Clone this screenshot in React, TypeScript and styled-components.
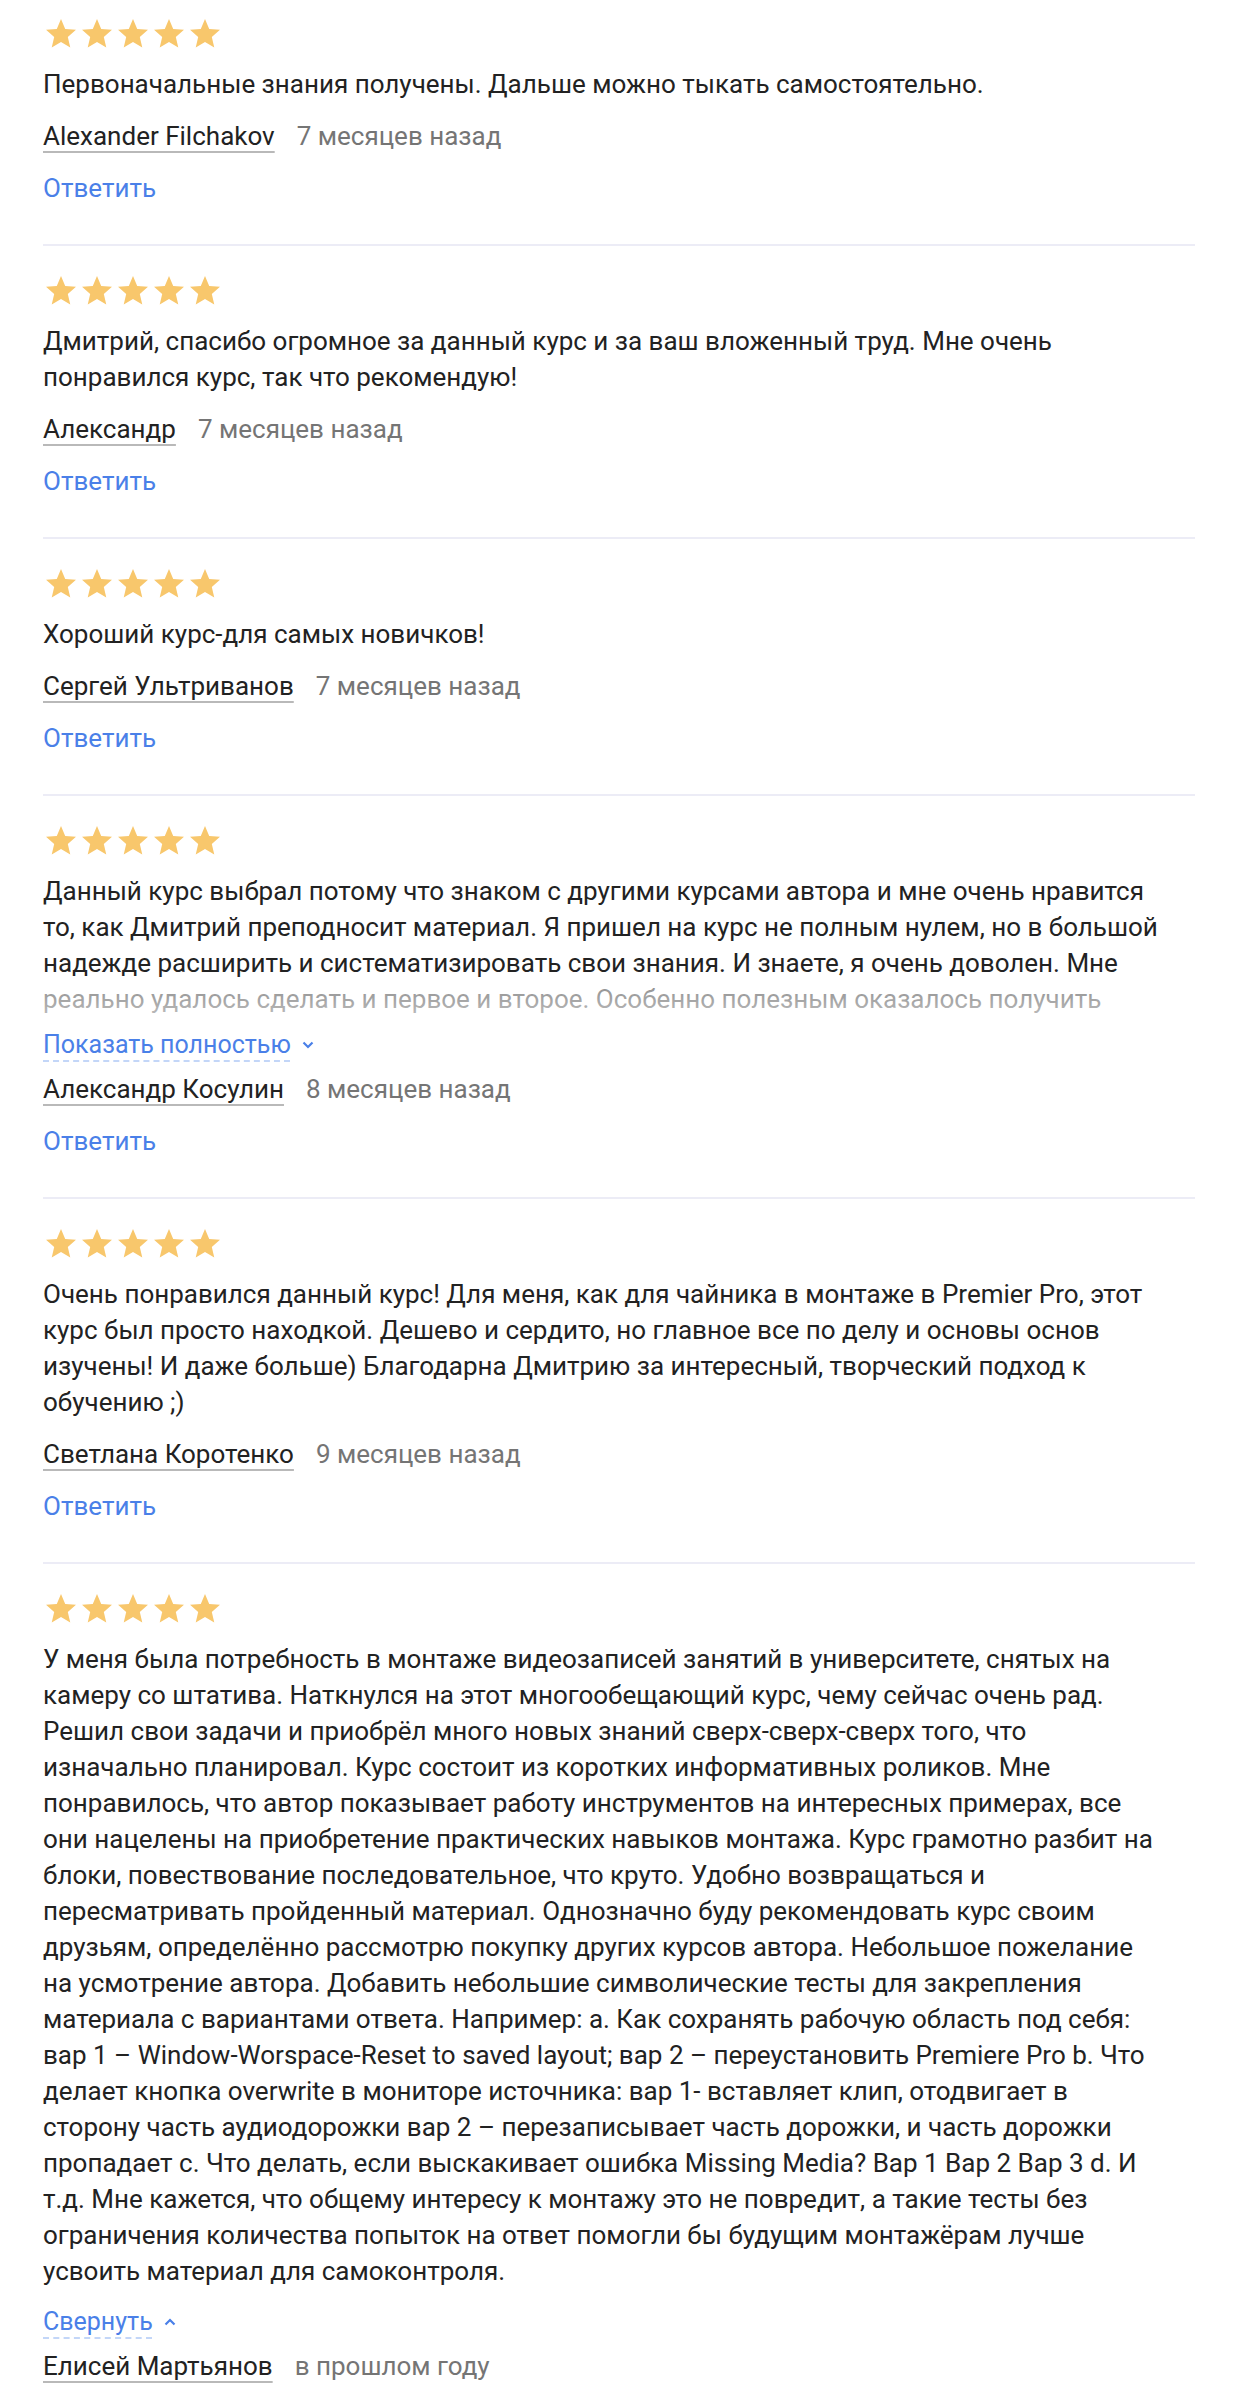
import React from "react"
import styled, { createGlobalStyle } from "styled-components"

const GlobalStyle = createGlobalStyle`
    body {
        margin: 0;
        background: #fff;
        font-family: Roboto, "Noto Sans", Arial, sans-serif;
        color: #222;
    }
`

const List = styled.div`
    width: 1152px;
    padding: 0 49px 0 43px;
`

const Item = styled.div<{ $first?: boolean, $last?: boolean }>`
    padding: ${p => p.$first ? "19px" : "30px"} 0 ${p => p.$last ? "20px" : "38px"};
    border-bottom: ${p => p.$last ? "none" : "2px solid #ececf6"};
`

const Stars = styled.div`
    display: flex;
    height: 32px;
    margin-bottom: 15px;
    svg {
        width: 36px;
        height: 36px;
        margin-top: -3px;
    }
`

const Text = styled.div<{ $collapsed?: boolean }>`
    position: relative;
    padding-right: 33px;
    font-size: 26px;
    line-height: 36px;
    color: #222;
    max-height: ${p => p.$collapsed ? "144px" : "none"};
    overflow: hidden;

    &::after {
        content: "";
        display: ${p => p.$collapsed ? "block" : "none"};
        position: absolute;
        left: 0;
        right: 0;
        bottom: 0;
        height: 40px;
        background: linear-gradient(rgba(255,255,255,0.45), rgba(255,255,255,0.7));
    }
`

const Toggle = styled.button<{ $gap: number }>`
    display: flex;
    align-items: center;
    gap: 10px;
    margin-top: ${p => p.$gap}px;
    padding: 0;
    border: none;
    background: none;
    cursor: pointer;
    font-family: inherit;
    font-size: 25px;
    line-height: 36px;
    color: #4a80e8;

    span {
        text-decoration: underline dashed #c3d6f8;
        text-decoration-thickness: 2px;
        text-underline-offset: 7px;
    }
`

const Meta = styled.div<{ $gap: number }>`
    display: flex;
    align-items: baseline;
    gap: 22px;
    margin-top: ${p => p.$gap}px;
    font-size: 26px;
    line-height: 36px;
`

const Author = styled.a`
    color: #222;
    text-decoration: underline #b9b9b9;
    text-decoration-thickness: 2px;
    text-underline-offset: 6px;
`

const Date = styled.span`
    color: #757575;
`

const Reply = styled.a`
    display: block;
    margin-top: 16px;
    font-size: 26px;
    line-height: 36px;
    color: #4a80e8;
    text-decoration: none;
`

const Star = () => (
    <svg viewBox="0 0 24 24">
        <path fill="#f8c76c" d="M12 17.27L18.18 21l-1.64-7.03L22 9.24l-7.19-.61L12 2 9.19 8.63 2 9.24l5.46 4.73L5.82 21z" />
    </svg>
)

const Chevron: React.FC<{ up?: boolean }> = ({ up }) => (
    <svg width="14" height="10" viewBox="0 0 14 10">
        <path d={up ? "M2.5 7.5l4.5-4.5 4.5 4.5" : "M2.5 2.5l4.5 4.5 4.5-4.5"} fill="none" stroke="#4a80e8" strokeWidth="2.2" />
    </svg>
)

type Review = {
    author: string
    date: string
    text: string
    toggle?: "more" | "less"
}

const reviews: Review[] = [
    {
        author: "Alexander Filchakov",
        date: "7 месяцев назад",
        text: "Первоначальные знания получены. Дальше можно тыкать самостоятельно.",
    },
    {
        author: "Александр",
        date: "7 месяцев назад",
        text: "Дмитрий, спасибо огромное за данный курс и за ваш вложенный труд. Мне очень понравился курс, так что рекомендую!",
    },
    {
        author: "Сергей Ультриванов",
        date: "7 месяцев назад",
        text: "Хороший курс-для самых новичков!",
    },
    {
        author: "Александр Косулин",
        date: "8 месяцев назад",
        text: "Данный курс выбрал потому что знаком с другими курсами автора и мне очень нравится то, как Дмитрий преподносит материал. Я пришел на курс не полным нулем, но в большой надежде расширить и систематизировать свои знания. И знаете, я очень доволен. Мне реально удалось сделать и первое и второе. Особенно полезным оказалось получить практические навыки работы с программой и понимание того, как строится монтаж.",
        toggle: "more",
    },
    {
        author: "Светлана Коротенко",
        date: "9 месяцев назад",
        text: "Очень понравился данный курс! Для меня, как для чайника в монтаже в Premier Pro, этот курс был просто находкой. Дешево и сердито, но главное все по делу и основы основ изучены! И даже больше) Благодарна Дмитрию за интересный, творческий подход к обучению ;)",
    },
    {
        author: "Елисей Мартьянов",
        date: "в прошлом году",
        text: "У меня была потребность в монтаже видеозаписей занятий в университете, снятых на камеру со штатива. Наткнулся на этот многообещающий курс, чему сейчас очень рад. Решил свои задачи и приобрёл много новых знаний сверх-сверх-сверх того, что изначально планировал. Курс состоит из коротких информативных роликов. Мне понравилось, что автор показывает работу инструментов на интересных примерах, все они нацелены на приобретение практических навыков монтажа. Курс грамотно разбит на блоки, повествование последовательное, что круто. Удобно возвращаться и пересматривать пройденный материал. Однозначно буду рекомендовать курс своим друзьям, определённо рассмотрю покупку других курсов автора. Небольшое пожелание на усмотрение автора. Добавить небольшие символические тесты для закрепления материала с вариантами ответа. Например: a. Как сохранять рабочую область под себя: вар 1 – Window-Worspace-Reset to saved layout; вар 2 – переустановить Premiere Pro b. Что делает кнопка overwrite в мониторе источника: вар 1- вставляет клип, отодвигает в сторону часть аудиодорожки вар 2 – перезаписывает часть дорожки, и часть дорожки пропадает c. Что делать, если выскакивает ошибка Missing Media? Вар 1 Вар 2 Вар 3 d. И т.д. Мне кажется, что общему интересу к монтажу это не повредит, а такие тесты без ограничения количества попыток на ответ помогли бы будущим монтажёрам лучше усвоить материал для самоконтроля.",
        toggle: "less",
    },
]

const App: React.FC = () => {
    return (
        <>
            <GlobalStyle />
            <List>
                {reviews.map((r, i) => {
                    const last = i === reviews.length - 1
                    return (
                        <Item key={i} $first={i === 0} $last={last}>
                            <Stars>
                                {[0, 1, 2, 3, 4].map(n => <Star key={n} />)}
                            </Stars>
                            <Text $collapsed={r.toggle === "more"}>{r.text}</Text>
                            {r.toggle && (
                                <Toggle $gap={r.toggle === "more" ? 10 : 15}>
                                    <span>{r.toggle === "more" ? "Показать полностью" : "Свернуть"}</span>
                                    <Chevron up={r.toggle === "less"} />
                                </Toggle>
                            )}
                            <Meta $gap={r.toggle ? 8 : 16}>
                                <Author>{r.author}</Author>
                                <Date>{r.date}</Date>
                            </Meta>
                            {!last && <Reply>Ответить</Reply>}
                        </Item>
                    )
                })}
            </List>
        </>
    )
}

export default App
